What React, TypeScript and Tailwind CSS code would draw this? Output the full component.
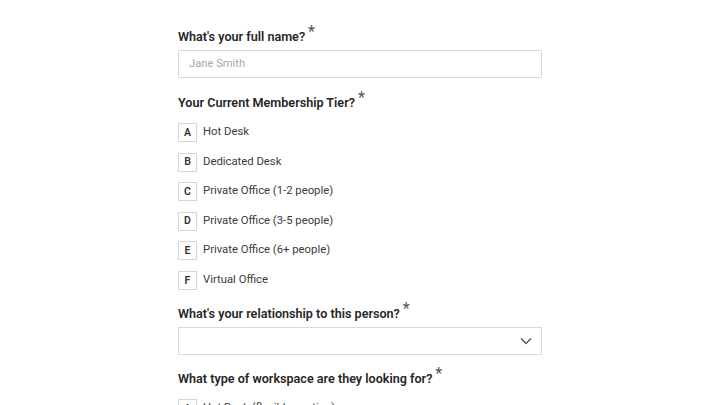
import React from "react";

const tiers = [
  ["A", "Hot Desk"],
  ["B", "Dedicated Desk"],
  ["C", "Private Office (1-2 people)"],
  ["D", "Private Office (3-5 people)"],
  ["E", "Private Office (6+ people)"],
  ["F", "Virtual Office"],
];

function Label({ children }: { children: React.ReactNode }) {
  return (
    <div className="h-[20px] flex items-center text-[12.6px] font-semibold text-[#262626] leading-[20px]">
      <span>{children}</span>
      <span className="ml-[3px] text-[16px] font-normal text-[#555] relative -top-[5px]">*</span>
    </div>
  );
}

function Option({ k, text }: { k: string; text: string }) {
  return (
    <div className="flex items-center h-[19px]">
      <div className="w-[19px] h-[19px] border border-[#d6d6d6] bg-white flex items-center justify-center text-[10.5px] font-semibold text-[#333]">
        {k}
      </div>
      <span className="ml-[6px] text-[11.3px] text-[#3a3a3a]">{text}</span>
    </div>
  );
}

export default function App() {
  return (
    <div className="w-[720px] h-[405px] overflow-hidden bg-white" style={{ fontFamily: 'Roboto, "Noto Sans", sans-serif' }}>
      <div className="w-[364px] ml-[178px] pt-[27px]">
        <Label>What's your full name?</Label>
        <div className="mt-[3px] h-[28px] border border-[#d9d9d9] flex items-center px-[10px] text-[11.2px] text-[#a8a8a8]">
          Jane Smith
        </div>
        <div className="mt-[15px]">
          <Label>Your Current Membership Tier?</Label>
        </div>
        <div className="mt-[10px] flex flex-col gap-[10.6px]">
          {tiers.map(([k, t]) => (
            <Option key={k} k={k} text={t} />
          ))}
        </div>
        <div className="mt-[14px]">
          <Label>What's your relationship to this person?</Label>
        </div>
        <div className="mt-[3px] h-[28px] border border-[#d9d9d9] flex items-center justify-end pr-[9px]">
          <svg width="12" height="8" viewBox="0 0 12 8" fill="none">
            <path d="M1 1.5 L6 6.5 L11 1.5" stroke="#555" strokeWidth="1.4" />
          </svg>
        </div>
        <div className="mt-[14px]">
          <Label>What type of workspace are they looking for?</Label>
        </div>
        <div className="mt-[10px] flex flex-col gap-[10.6px]">
          <Option k="A" text="Hot Desk (flexible seating)" />
        </div>
      </div>
    </div>
  );
}
